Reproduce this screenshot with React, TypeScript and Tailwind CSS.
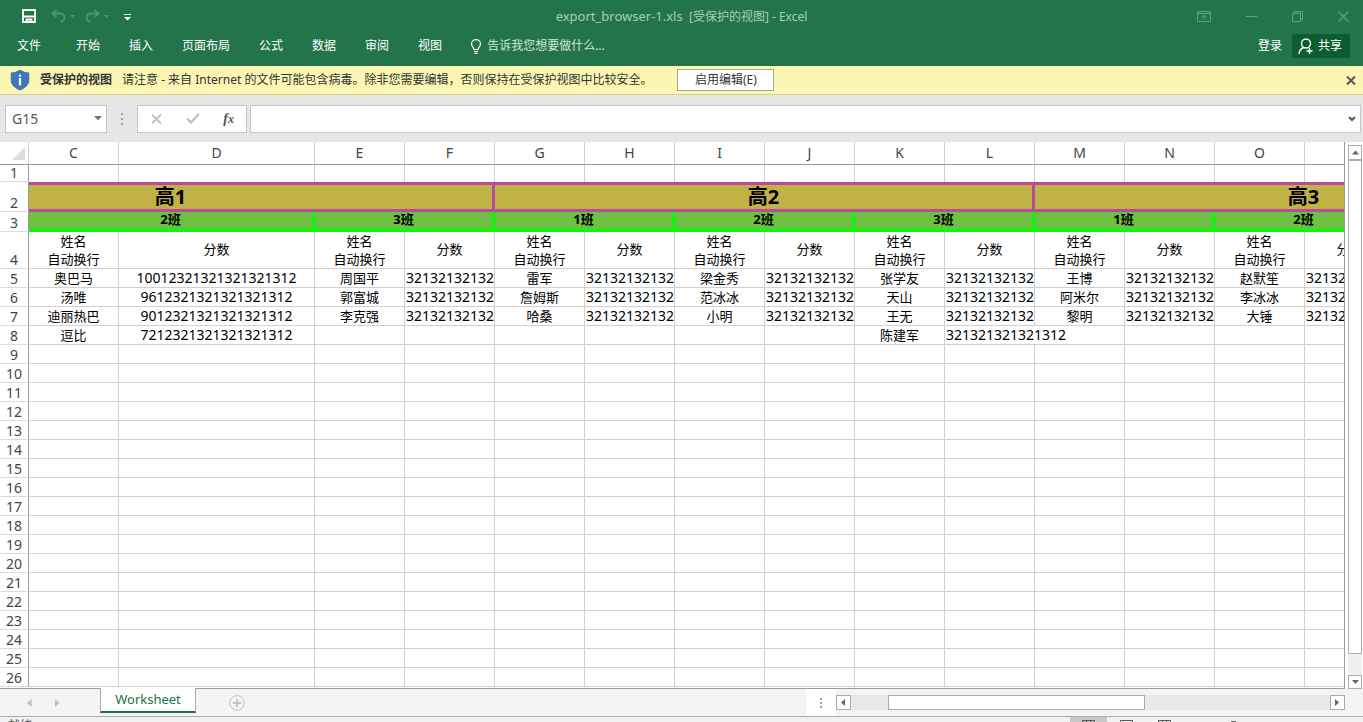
import { useState } from 'react';

const TABS = ['开始', '插入', '页面布局', '公式', '数据', '审阅', '视图'];
const COLUMNS = ['C', 'D', 'E', 'F', 'G', 'H', 'I', 'J', 'K', 'L', 'M', 'N', 'O', 'P'];

// grades run past both edges of the visible columns, the padding keeps their names centred on the full range
const GRADES = [
  { name: '高1', span: 4, className: 'pr-[180px]' },
  { name: '高2', span: 6, className: '' },
  { name: '高3', span: 4, className: 'pl-[180px]' },
];
const CLASSES = ['2班', '3班', '1班', '2班', '3班', '1班', '2班'];

const SCORE = '32132132132';
const ROWS: string[][] = [
  ['奥巴马', '10012321321321321312', '周国平', SCORE, '雷军', SCORE, '梁金秀', SCORE, '张学友', SCORE, '王博', SCORE, '赵默笙', SCORE],
  ['汤唯', '9612321321321321312', '郭富城', SCORE, '詹姆斯', SCORE, '范冰冰', SCORE, '天山', SCORE, '阿米尔', SCORE, '李冰冰', SCORE],
  ['迪丽热巴', '9012321321321321312', '李克强', SCORE, '哈桑', SCORE, '小明', SCORE, '王无', SCORE, '黎明', SCORE, '大锤', SCORE],
  ['逗比', '7212321321321321312', '', '', '', '', '', '', '陈建军', '321321321321312'],
];

const LINE = 'border-r border-b border-[#d0d0d0]';

function RowHead({ n }: { n: number }) {
  return (
    <th
      scope="row"
      className="border-r border-r-[#9b9b9b] border-b border-b-[#dcdcdc] p-0 pb-px align-bottom text-sm leading-[15px] font-normal text-[#444]"
    >
      {n}
    </th>
  );
}

function DataRow({ n, cells }: { n: number; cells: string[] }) {
  return (
    <tr className="h-[19px]">
      <RowHead n={n} />
      {COLUMNS.map((col, i) => {
        const value = cells[i] || '';
        // a long score runs over into the empty cell on its right
        if (i > 0 && (cells[i - 1] || '').length === 15) return null;
        if (value.length === 15) {
          return (
            <td key={col} colSpan={2} className={`${LINE} p-0 pb-px pl-px text-left text-sm leading-[17px]`}>
              {value}
            </td>
          );
        }
        if (i % 2 === 0) {
          return (
            <td key={col} className={`${LINE} p-0 text-center text-[13px] leading-[18px]`}>
              {value}
            </td>
          );
        }
        return (
          <td key={col} className={`${LINE} p-0 pb-px text-sm leading-[17px] whitespace-nowrap ${i === 1 ? 'text-center' : 'pl-px text-left'}`}>
            {value}
          </td>
        );
      })}
    </tr>
  );
}

function Sheet() {
  const blank = Array.from({ length: 18 }, (_, i) => i + 9);
  return (
    <table className="w-[1395px] table-fixed border-separate border-spacing-0 text-black">
      <colgroup>
        <col className="w-[29px]" />
        {COLUMNS.map((col) => (
          <col key={col} className={col === 'D' ? 'w-[196px]' : 'w-[90px]'} />
        ))}
      </colgroup>
      <thead>
        <tr className="h-[23px]">
          <th className="border-r border-b border-r-[#d0d0d0] border-b-[#9b9b9b] p-0">
            <svg className="ml-[12px] h-[13px] w-[13px]" viewBox="0 0 13 13" aria-hidden="true">
              <path d="M13 0v13H0z" fill="#dcdcdc" />
            </svg>
          </th>
          {COLUMNS.map((col) => (
            <th
              key={col}
              scope="col"
              className="border-r border-b border-r-[#d0d0d0] border-b-[#9b9b9b] p-0 text-sm leading-[22px] font-normal text-[#444]"
            >
              {col === 'P' ? '' : col}
            </th>
          ))}
        </tr>
      </thead>
      <tbody>
        <tr className="h-[17px]">
          <RowHead n={1} />
          {COLUMNS.map((col) => (
            <td key={col} className="border-r border-[#d0d0d0] p-0" />
          ))}
        </tr>
        <tr className="h-[30px]">
          <RowHead n={2} />
          {GRADES.map((g) => (
            <td
              key={g.name}
              colSpan={g.span}
              className={`border-y-[3px] border-r-[3px] border-[#b94a9c] bg-[#c0b245] p-0 text-center text-xl leading-[22px] font-bold ${g.className}`}
            >
              {g.name}
            </td>
          ))}
        </tr>
        <tr className="h-5">
          <RowHead n={3} />
          {CLASSES.map((name, i) => (
            <td
              key={i}
              colSpan={2}
              className="border-r-[3px] border-b-[3px] border-[#00ff00] bg-[#6cc043] p-0 text-center align-top text-[13px] leading-[14px] font-bold"
            >
              {name}
            </td>
          ))}
        </tr>
        <tr className="h-[37px]">
          <RowHead n={4} />
          {COLUMNS.map((col, i) =>
            i % 2 === 0 ? (
              <td key={col} className={`${LINE} p-0 text-center text-[13px] leading-[18px]`}>
                姓名
                <br />
                自动换行
              </td>
            ) : (
              <td key={col} className={`${LINE} p-0 pb-0.5 text-center text-[13px] leading-[18px]`}>
                分数
              </td>
            ),
          )}
        </tr>
        {ROWS.map((cells, i) => (
          <DataRow key={i} n={i + 5} cells={cells} />
        ))}
        {blank.map((n) => (
          <DataRow key={n} n={n} cells={[]} />
        ))}
      </tbody>
    </table>
  );
}

function TitleBar() {
  return (
    <div className="flex h-8 items-center justify-between pr-[14px] pl-[22px]">
      <div className="flex flex-1 items-center">
        <button aria-label="保存">
          <svg width="14" height="14" viewBox="0 0 14 14" fill="none" stroke="#fff" strokeWidth="1.8">
            <path d="M1 1h12v12H1zM1.500 7.500h11M4.500 13v-2.500h5V13" />
          </svg>
        </button>
        <button aria-label="撤消" className="ml-[15px] flex items-center gap-1">
          <svg width="15" height="14" viewBox="0 0 15 14" fill="none" stroke="#4f9370" strokeWidth="2">
            <path d="M5.500 1L1.500 4.500l4 3.500M2 4.500h7c3 0 4.500 2 4.500 4s-1.500 4-4 4" />
          </svg>
          <svg width="5" height="3" viewBox="0 0 5 3" fill="#4f9370"><path d="M0 0h5L2.500 3z" /></svg>
        </button>
        <button aria-label="恢复" className="ml-[10px] flex items-center gap-1">
          <svg width="15" height="14" viewBox="0 0 15 14" fill="none" stroke="#4f9370" strokeWidth="2">
            <path d="M9.500 1l4 3.500-4 3.500M13 4.500H6c-3 0-4.500 2-4.500 4s1.500 4 4 4" />
          </svg>
          <svg width="5" height="3" viewBox="0 0 5 3" fill="#4f9370"><path d="M0 0h5L2.500 3z" /></svg>
        </button>
        <button aria-label="自定义快速访问工具栏" className="ml-[15px] pt-[3px]">
          <svg width="7" height="7" viewBox="0 0 7 7" fill="#fff">
            <path d="M0 0h7v1H0zM0 3h7L3.500 6.500z" />
          </svg>
        </button>
      </div>
      <div className="mr-2 pt-px text-xs whitespace-pre text-[#a9cdb9]">
        <span className="text-[13px]">export_browser-1.xls</span>&nbsp; [受保护的视图] - Excel
      </div>
      <div className="flex flex-1 items-center justify-end text-[#62a27f]">
        <button aria-label="功能区显示选项">
          <svg width="14" height="11" viewBox="0 0 14 11" fill="none" stroke="currentColor">
            <path d="M.5.5h13v10H.5zM.5 2.500h13M7 9V4.500M4.500 6.500L7 4.500l2.500 2" />
          </svg>
        </button>
        <button aria-label="最小化" className="ml-[35px]">
          <svg width="11" height="11" viewBox="0 0 11 11" stroke="currentColor"><path d="M0 5.500h11" /></svg>
        </button>
        <button aria-label="还原" className="ml-[35px]">
          <svg width="11" height="11" viewBox="0 0 11 11" fill="none" stroke="currentColor">
            <path d="M.5 2.500h8v8h-8zM2.500 2.500v-2h8v8h-2" />
          </svg>
        </button>
        <button aria-label="关闭" className="ml-[35px]">
          <svg width="11" height="11" viewBox="0 0 11 11" fill="none" stroke="currentColor" strokeWidth="1.200">
            <path d="M.5.5l10 10M10.500.5l-10 10" />
          </svg>
        </button>
      </div>
    </div>
  );
}

function Ribbon() {
  return (
    <nav className="flex h-[34px] items-start justify-between pr-[13px] pl-[17px] text-xs text-white">
      <div className="flex items-center pt-[5px]">
        <button className="mr-[35px] leading-[18px]">文件</button>
        <div className="flex gap-[29px]">
          {TABS.map((tab) => (
            <button key={tab} className="leading-[18px]">{tab}</button>
          ))}
        </div>
        <button className="ml-[28px] flex items-center gap-[5px] leading-[18px] text-[#d3e6db]">
          <svg width="12" height="15" viewBox="0 0 12 15" fill="none" stroke="#fff" strokeWidth="1.200">
            <path d="M4 10.500C4 8.500 1.500 7.500 1.500 5a4.500 4.300 0 0 1 9 0C10.500 7.500 8 8.500 8 10.500zM4 12.500h4M4.500 14.300h3" />
          </svg>
          告诉我您想要做什么...
        </button>
      </div>
      <div className="flex items-center gap-[10px] pt-[2px]">
        <button>登录</button>
        <button className="flex h-[24px] items-center gap-1 rounded-xs bg-[#0e5c31] pr-2 pl-[6px]">
          <svg width="16" height="17" viewBox="0 0 16 17" fill="none" stroke="#fff" strokeWidth="1.400">
            <circle cx="8" cy="5.500" r="4.500" />
            <path d="M1 16c.3-3.200 2-5.500 4.500-6.500M11.500 10v6M8.500 13h6" />
          </svg>
          共享
        </button>
      </div>
    </nav>
  );
}

function MessageBar() {
  const [open, setOpen] = useState(true);
  if (!open) return null;

  return (
    <div className="flex h-[29px] shrink-0 items-center border-b border-[#d8cf90] bg-[#fcf6b4] pr-[7px] pl-[10px] text-xs text-[#333]">
      <svg width="20" height="22" viewBox="0 0 20 22" aria-hidden="true">
        <path d="M10 .5C7.500 2.500 4 3.500.7 3.500V11c0 5 4.500 8.500 9.300 10.500 4.800-2 9.300-5.500 9.300-10.500V3.500C16 3.500 12.500 2.500 10 .5z" fill="#3f78b5" />
        <path d="M8.900 5.500h2.200v2.200H8.900zM8.900 9h2.200v7.500H8.900z" fill="#fff" />
      </svg>
      <strong className="ml-[10px]">受保护的视图</strong>
      <span className="ml-[10px]">
        请注意 - 来自 Internet 的文件可能包含病毒。除非您需要编辑，否则保持在受保护视图中比较安全。
      </span>
      <button className="ml-[25px] h-[22px] w-[97px] border border-[#aaa789] bg-white">启用编辑(E)</button>
      <button aria-label="关闭此消息" className="ml-auto" onClick={() => setOpen(false)}>
        <svg width="10" height="9" viewBox="0 0 10 9" stroke="#555" strokeWidth="2">
          <path d="M1 .5l8 8M9 .5l-8 8" />
        </svg>
      </button>
    </div>
  );
}

function FormulaBar() {
  return (
    <div className="flex h-[47px] shrink-0 items-center bg-[#e6e6e6] pr-[2px] pl-[5px]">
      <div className="flex h-7 w-[102px] items-center border border-[#c6c6c6] bg-white pr-1">
        <input aria-label="名称框" defaultValue="G15" className="w-full min-w-0 pl-[6px] text-sm text-[#555] outline-none" />
        <svg className="shrink-0" width="8" height="5" viewBox="0 0 8 5" fill="#777"><path d="M0 0h8L4 4.500z" /></svg>
      </div>
      <svg className="ml-[14px]" width="2" height="12" viewBox="0 0 2 12" fill="#a0a0a0" aria-hidden="true">
        <path d="M0 0h2v2H0zM0 5h2v2H0zM0 10h2v2H0z" />
      </svg>
      <div className="ml-[14px] flex h-7 w-[110px] items-center justify-between border border-[#c6c6c6] bg-white pr-3 pl-[13px]">
        <button aria-label="取消">
          <svg width="11" height="10" viewBox="0 0 11 10" stroke="#bdbdbd" strokeWidth="1.800"><path d="M1 .5l9 9M10 .5l-9 9" /></svg>
        </button>
        <button aria-label="输入">
          <svg width="14" height="11" viewBox="0 0 14 11" fill="none" stroke="#bdbdbd" strokeWidth="2.200"><path d="M1 5.500L5 9.500 13 1" /></svg>
        </button>
        <button className="font-['Liberation_Serif',serif] text-sm leading-4 font-bold text-[#555] italic">
          f<span className="text-xs">x</span>
        </button>
      </div>
      <div className="ml-[3px] flex h-7 flex-1 items-center border border-[#c6c6c6] bg-white pr-1">
        <input aria-label="编辑栏" className="h-full min-w-0 flex-1 px-2 text-sm outline-none" />
        <svg width="8" height="6" viewBox="0 0 8 6" fill="none" stroke="#555" strokeWidth="2"><path d="M1 1l3 3 3-3" /></svg>
      </div>
    </div>
  );
}

const SCROLL_BUTTON = 'flex shrink-0 items-center justify-center border border-[#ababab] bg-white';

function SheetTabs() {
  return (
    <div className="flex h-[28px] shrink-0 border-b border-[#ababab] bg-[#f4f4f4]">
      <div className="flex w-[100px] items-center gap-[23px] pl-[27px]">
        <button aria-label="上一个工作表">
          <svg width="5" height="8" viewBox="0 0 5 8" fill="#bfbfbf"><path d="M4.500 0v8L0 4z" /></svg>
        </button>
        <button aria-label="下一个工作表">
          <svg width="5" height="8" viewBox="0 0 5 8" fill="#bfbfbf"><path d="M0 0v8l4.500-4z" /></svg>
        </button>
      </div>
      <button className="-mt-px h-[25px] w-[96px] border-x border-b-2 border-x-[#ababab] border-b-[#217346] bg-white text-[13px] leading-[23px] text-[#217346]">
        Worksheet
      </button>
      <button aria-label="新工作表" className="ml-[33px]">
        <svg width="16" height="16" viewBox="0 0 16 16" fill="none" stroke="#c0c0c0">
          <circle cx="8" cy="8" r="7.300" />
          <path d="M8 4v8M4 8h8" strokeWidth="1.800" />
        </svg>
      </button>
      <div className="ml-auto flex w-[557px] items-center">
        <div className="flex h-full w-[30px] items-center justify-center bg-white">
          <svg width="2" height="10" viewBox="0 0 2 10" fill="#a0a0a0"><path d="M0 0h2v2H0zM0 4h2v2H0zM0 8h2v2H0z" /></svg>
        </div>
        <div className="mr-[18px] flex h-[15px] flex-1 bg-[#e8e8e8]">
          <button aria-label="向左滚动" className={`${SCROLL_BUTTON} w-[15px]`}>
            <svg width="5" height="7" viewBox="0 0 5 7" fill="#666"><path d="M4 0v7L0 3.500z" /></svg>
          </button>
          <div className="ml-[37px] w-[257px] border border-[#ababab] bg-white" />
          <button aria-label="向右滚动" className={`${SCROLL_BUTTON} ml-auto w-[15px]`}>
            <svg width="5" height="7" viewBox="0 0 5 7" fill="#666"><path d="M0 0v7l4-3.500z" /></svg>
          </button>
        </div>
      </div>
    </div>
  );
}

function StatusBar() {
  return (
    <footer className="flex h-[5px] shrink-0 items-start justify-between overflow-hidden bg-[#f1f1f1] pr-[127px] pl-2 text-xs text-[#444]">
      <span className="leading-[18px]">就绪</span>
      <div className="flex items-start">
        <div className="flex h-5 w-[37px] justify-center bg-[#c8c8c8] pt-[3px]">
          <svg width="13" height="11" viewBox="0 0 13 11" fill="none" stroke="#555"><path d="M.5.5h12v10H.5zM.5 3.500h12M4.500.5v10M8.500.5v10" /></svg>
        </div>
        <svg className="mt-[3px] ml-[13px]" width="13" height="11" viewBox="0 0 13 11" fill="none" stroke="#555"><path d="M.5.5h12v10H.5zM3.500 3h6v5h-6z" /></svg>
        <svg className="mt-[3px] ml-[25px]" width="13" height="11" viewBox="0 0 13 11" fill="none" stroke="#555"><path d="M.5.5h12v10H.5zM4.500.5v5h4v-5" /></svg>
        <svg className="mt-[4px] ml-[60px]" width="5" height="10" viewBox="0 0 5 10" fill="#666"><path d="M0 0h5v10H0z" /></svg>
      </div>
    </footer>
  );
}

export default function App() {
  return (
    <div className="flex h-screen min-h-[400px] flex-col overflow-hidden bg-white font-['Noto_Sans','Noto_Sans_CJK_SC',sans-serif]">
      <header className="shrink-0 bg-[#237549]">
        <TitleBar />
        <Ribbon />
      </header>
      <MessageBar />
      <FormulaBar />
      <main className="flex min-h-0 flex-1">
        <div className="min-w-0 flex-1 overflow-hidden border-r border-b border-[#9b9b9b]">
          <Sheet />
        </div>
        <div className="flex w-[18px] flex-col pt-[3px] pr-px pl-[3px]">
          <button aria-label="向上滚动" className={`${SCROLL_BUTTON} h-[15px]`}>
            <svg width="7" height="5" viewBox="0 0 7 5" fill="#666"><path d="M0 4.500h7L3.500.5z" /></svg>
          </button>
          <div className="flex flex-1 flex-col bg-[#f0f0f0] pb-[21px]">
            <div className="flex-1 border border-[#ababab] bg-white" />
          </div>
          <button aria-label="向下滚动" className={`${SCROLL_BUTTON} h-[14px]`}>
            <svg width="7" height="5" viewBox="0 0 7 5" fill="#666"><path d="M0 0h7L3.500 4z" /></svg>
          </button>
        </div>
      </main>
      <SheetTabs />
      <StatusBar />
    </div>
  );
}
